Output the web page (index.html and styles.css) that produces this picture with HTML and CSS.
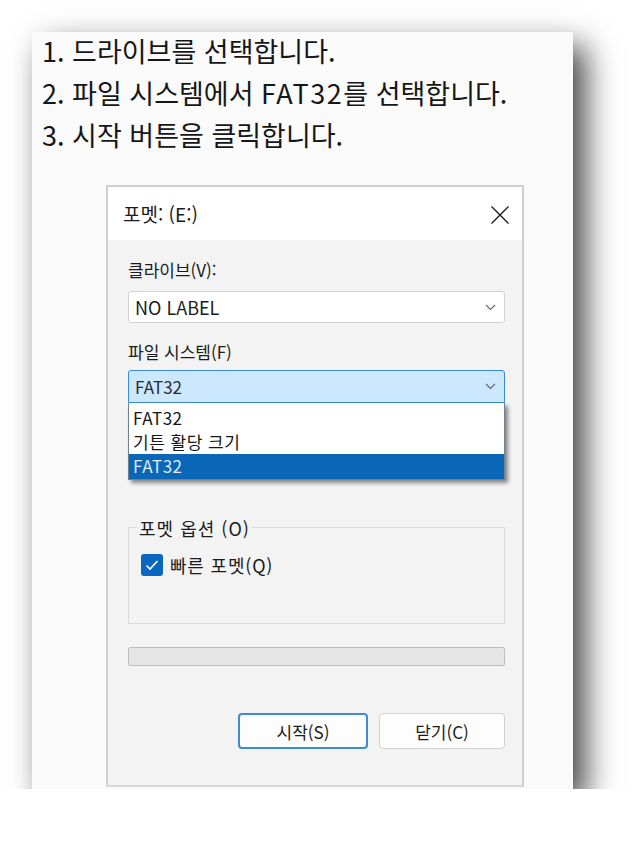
FILE: index.html
```html
<!DOCTYPE html>
<html lang="ko">
<head>
<meta charset="utf-8">
<title>포멧</title>
<link rel="stylesheet" href="styles.css">
</head>
<body>
<div class="card">
  <ol class="steps">
    <li>1. 드라이브를 선택합니다.</li>
    <li>2. 파일 시스템에서 <span class="latin">FAT32</span>를 선택합니다.</li>
    <li>3. 시작 버튼을 클릭합니다.</li>
  </ol>
  <div class="dialog">
    <div class="titlebar">
      <span class="title">포멧: (E:)</span>
      <svg class="close" width="20" height="18" viewBox="0 0 20 18"><path d="M1.5 0.5L18.5 17.5M18.5 0.5L1.5 17.5" stroke="#1c1c1c" stroke-width="1.4" fill="none"/></svg>
    </div>
    <div class="body">
      <div class="label label-drive">클라이브(V):</div>
      <div class="combo">
        <span>NO LABEL</span>
        <svg class="chev" width="11" height="7" viewBox="0 0 11 7"><path d="M1 1l4.5 4.5L10 1" stroke="#6a6a6a" stroke-width="1.1" fill="none"/></svg>
      </div>
      <div class="label label-fs">파일 시스템(F)</div>
      <div class="combo-wrap">
        <div class="combo combo-active">
          <span>FAT32</span>
          <svg class="chev" width="11" height="7" viewBox="0 0 11 7"><path d="M1 1l4.5 4.5L10 1" stroke="#5a6470" stroke-width="1.1" fill="none"/></svg>
        </div>
        <ul class="popup">
          <li>FAT32</li>
          <li>기튼 활당 크기</li>
          <li class="selected">FAT32</li>
        </ul>
      </div>
      <div class="group">
        <span class="legend">포멧 옵션 (O)</span>
        <div class="check-row">
          <span class="checkbox"><svg width="22" height="22" viewBox="0 0 22 22"><path d="M5.5 11.5l3.5 3.5 7.5-8" stroke="#fff" stroke-width="1.6" fill="none"/></svg></span>
          <span class="check-label">빠른 포멧(Q)</span>
        </div>
      </div>
      <div class="progress"></div>
      <div class="buttons">
        <button class="btn btn-default">시작(S)</button>
        <button class="btn btn-close">닫기(C)</button>
      </div>
    </div>
  </div>
</div>
</body>
</html>
```

FILE: styles.css
```css
* { box-sizing: border-box; }

html, body {
  margin: 0;
  background: #ffffff;
}

body {
  padding: 32px 0 0 32px;
  font-family: "Noto Sans CJK KR", "Noto Sans", sans-serif;
  color: #1a1a1a;
}

.card {
  width: 541px;
  height: 757px;
  background: #fafafa;
  box-shadow: 12px 14px 30px rgba(0, 0, 0, 0.75);
  overflow: hidden;
}

.steps {
  list-style: none;
  margin: -2px 0 0 0;
  padding: 0 0 0 10px;
  font-size: 27px;
  line-height: 42px;
  color: #161616;
}

.latin {
  letter-spacing: 1.5px;
}

.dialog {
  margin: 29px 0 0 74px;
  width: 418px;
  height: 602px;
  border: 2px solid #cfcfcf;
  border-bottom-color: #d6d6d6;
  background: #f3f3f3;
}

.titlebar {
  height: 53px;
  background: #ffffff;
  display: flex;
  align-items: center;
  justify-content: space-between;
  padding: 0 12px 0 15px;
}

.title {
  font-size: 19px;
  line-height: 24px;
  margin-top: 1px;
  color: #1b1b1b;
}

.close {
  display: block;
  margin-top: 3px;
}

.body {
  padding: 20px 17px 0 20px;
}

.label {
  font-size: 17px;
  line-height: 20px;
  color: #1b1b1b;
}

.label-fs {
  margin-top: 19px;
}

.combo {
  margin-top: 11px;
  height: 32px;
  background: #ffffff;
  border: 1px solid #d2d2d2;
  border-radius: 3px;
  display: flex;
  align-items: center;
  justify-content: space-between;
  padding: 0 8px 0 6px;
  font-size: 18px;
  color: #1b1b1b;
}

.chev {
  display: block;
}

.combo-wrap {
  position: relative;
  margin-top: 8px;
}

.combo-active {
  margin-top: 0;
  height: 33px;
  background: #cce8ff;
  border: 1px solid #3d8ad4;
  border-radius: 3px 3px 0 0;
  color: #2a2a2a;
  font-size: 17px;
}

.popup {
  position: absolute;
  top: 100%;
  left: 0;
  width: 100%;
  margin: 0;
  padding: 3px 0 0 0;
  list-style: none;
  background: #ffffff;
  border: 1px solid #6f7f90;
  border-top: none;
  box-shadow: 3px 3px 4px rgba(0, 0, 0, 0.45);
  font-size: 17px;
  z-index: 2;
}

.popup li {
  height: 24px;
  line-height: 24px;
  padding-left: 4px;
  letter-spacing: 0.5px;
  color: #161616;
}

.popup li.selected {
  height: 25px;
  background: #0a67b8;
  color: #dfeaf5;
}

.group {
  margin-top: 124px;
  height: 97px;
  border: 1px solid #dadada;
  padding: 0 0 0 12px;
}

.legend {
  display: table;
  margin: -10px 0 0 -4px;
  padding: 0 2px;
  background: #f3f3f3;
  font-size: 18px;
  line-height: 20px;
  letter-spacing: 1px;
  color: #1b1b1b;
}

.check-row {
  margin-top: 16px;
  display: flex;
  align-items: center;
  gap: 7px;
}

.checkbox {
  width: 22px;
  height: 22px;
  border-radius: 3px;
  background: #0a67c0;
  display: block;
}

.checkbox svg {
  display: block;
}

.check-label {
  font-size: 18px;
  line-height: 22px;
  letter-spacing: 0.8px;
  color: #1b1b1b;
}

.progress {
  margin-top: 23px;
  height: 19px;
  border: 1px solid #bdbdbd;
  border-radius: 2px;
  background: #e6e6e6;
}

.buttons {
  margin-top: 47px;
  display: flex;
  justify-content: flex-end;
  gap: 11px;
}

.btn {
  height: 36px;
  border-radius: 4px;
  background: #fdfdfd;
  border: 1px solid #d0d0d0;
  font-family: "Noto Sans CJK KR", "Noto Sans", sans-serif;
  font-size: 17px;
  color: #1b1b1b;
  padding: 0;
}

.btn-default {
  width: 130px;
  border: 2px solid #3f8bd2;
}

.btn-close {
  width: 126px;
}
```
